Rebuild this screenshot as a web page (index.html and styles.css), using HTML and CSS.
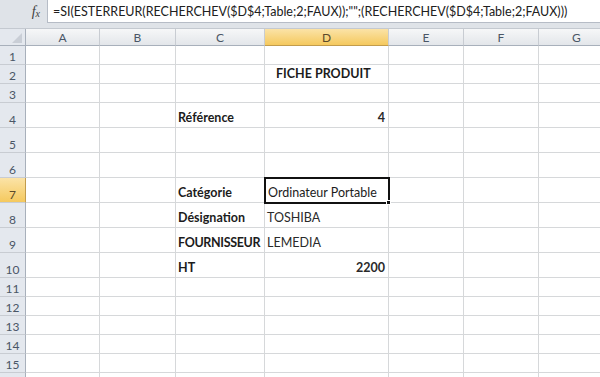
FILE: index.html
```html
<!DOCTYPE html>
<html>
<head>
<meta charset="utf-8">
<link rel="stylesheet" href="styles.css">
</head>
<body>
<div class="app">
  <div class="fbar">
    <div class="fx"><span>f</span><span class="x">x</span></div>
    <div class="finput">=SI(ESTERREUR(RECHERCHEV($D$4;Table;2;FAUX));"";(RECHERCHEV($D$4;Table;2;FAUX)))</div>
  </div>
  <div class="sheet">
    <div class="corner"><svg width="10" height="10" viewBox="0 0 10 10"><polygon points="10,0 10,10 0,10" fill="#c9ced6"/></svg></div>
    <div class="ch">A</div><div class="ch">B</div><div class="ch">C</div><div class="ch selh">D</div><div class="ch">E</div><div class="ch">F</div><div class="ch">G</div>

    <div class="rh">1</div><div class="c"></div><div class="c"></div><div class="c"></div><div class="c"></div><div class="c"></div><div class="c"></div><div class="c"></div>
    <div class="rh">2</div><div class="c"></div><div class="c"></div><div class="c"></div><div class="c title">FICHE PRODUIT</div><div class="c"></div><div class="c"></div><div class="c"></div>
    <div class="rh">3</div><div class="c"></div><div class="c"></div><div class="c"></div><div class="c"></div><div class="c"></div><div class="c"></div><div class="c"></div>
    <div class="rh">4</div><div class="c"></div><div class="c"></div><div class="c lbl">Référence</div><div class="c num">4</div><div class="c"></div><div class="c"></div><div class="c"></div>
    <div class="rh">5</div><div class="c"></div><div class="c"></div><div class="c"></div><div class="c"></div><div class="c"></div><div class="c"></div><div class="c"></div>
    <div class="rh">6</div><div class="c"></div><div class="c"></div><div class="c"></div><div class="c"></div><div class="c"></div><div class="c"></div><div class="c"></div>
    <div class="rh selr">7</div><div class="c"></div><div class="c"></div><div class="c lbl">Catégorie</div><div class="c sel">Ordinateur Portable<span class="handle"></span></div><div class="c"></div><div class="c"></div><div class="c"></div>
    <div class="rh">8</div><div class="c"></div><div class="c"></div><div class="c lbl">Désignation</div><div class="c val">TOSHIBA</div><div class="c"></div><div class="c"></div><div class="c"></div>
    <div class="rh">9</div><div class="c"></div><div class="c"></div><div class="c lbl caps">FOURNISSEUR</div><div class="c val">LEMEDIA</div><div class="c"></div><div class="c"></div><div class="c"></div>
    <div class="rh">10</div><div class="c"></div><div class="c"></div><div class="c lbl">HT</div><div class="c num">2200</div><div class="c"></div><div class="c"></div><div class="c"></div>
    <div class="rh">11</div><div class="c"></div><div class="c"></div><div class="c"></div><div class="c"></div><div class="c"></div><div class="c"></div><div class="c"></div>
    <div class="rh">12</div><div class="c"></div><div class="c"></div><div class="c"></div><div class="c"></div><div class="c"></div><div class="c"></div><div class="c"></div>
    <div class="rh">13</div><div class="c"></div><div class="c"></div><div class="c"></div><div class="c"></div><div class="c"></div><div class="c"></div><div class="c"></div>
    <div class="rh">14</div><div class="c"></div><div class="c"></div><div class="c"></div><div class="c"></div><div class="c"></div><div class="c"></div><div class="c"></div>
    <div class="rh">15</div><div class="c"></div><div class="c"></div><div class="c"></div><div class="c"></div><div class="c"></div><div class="c"></div><div class="c"></div>
    <div class="rh"></div><div class="c"></div><div class="c"></div><div class="c"></div><div class="c"></div><div class="c"></div><div class="c"></div><div class="c"></div>
  </div>
</div>
</body>
</html>
```
FILE: styles.css
```css
* { box-sizing: border-box; }
html, body { margin: 0; padding: 0; background: #fff; overflow: hidden; }
body { width: 600px; height: 377px; font-family: Lato, "Liberation Sans", sans-serif; color: #1c1c1c; }
.app { width: 600px; height: 377px; overflow: hidden; }

.fbar {
  height: 29px;
  background: #dfe3e8;
  display: flex;
  align-items: flex-start;
  border-bottom: 1px solid #c4c9d0;
}
.fx {
  width: 47px;
  height: 23px;
  display: flex;
  align-items: center;
  justify-content: flex-end;
  padding-right: 7px;
  font-family: "Liberation Serif", serif;
  font-style: italic;
  font-size: 14px;
  color: #3c3c3c;
}
.fx .x { font-size: 10px; margin-top: 3px; }
.finput {
  flex: 1;
  height: 23px;
  background: #fff;
  border-left: 1px solid #b6bcc6;
  border-bottom: 1px solid #b6bcc6;
  padding-left: 5px;
  display: flex;
  align-items: center;
  font-size: 12.5px;
  white-space: nowrap;
  color: #202020;
}

.sheet {
  display: grid;
  grid-template-columns: 26px 74px 76px 89px 124px 75px 75px 76px;
  grid-template-rows: 17px 19px 19px 19px 25px 25px 25px 25px 25px 25px 25px 19px 19px 19px 19px 19px 19px;
}
.corner {
  background: #e4e8ee;
  border-right: 1px solid #a8b0bb;
  border-bottom: 1px solid #a8b0bb;
  display: flex;
  align-items: flex-end;
  justify-content: flex-end;
  padding: 0 3px 2px 0;
}
.ch {
  background: linear-gradient(#f6f7f8, #e3e6ea);
  border-right: 1px solid #c8ccd2;
  border-bottom: 1px solid #a8b0bb;
  display: flex;
  align-items: center;
  justify-content: center;
  font-size: 12px;
  color: #4a5666;
}
.ch.selh {
  background: linear-gradient(#fbe3a7, #f5c95e);
  border-bottom: 1px solid #c29c4c;
  color: #5b4a2a;
}
.rh {
  background: #e4e8ee;
  border-right: 1px solid #a8b0bb;
  border-bottom: 1px solid #c8ccd2;
  display: flex;
  align-items: flex-end;
  justify-content: center;
  padding-bottom: 0;
  font-size: 12px;
  color: #4a5666;
}
.rh.selr {
  background: linear-gradient(#fbe3a7, #f5c95e);
  border-right: 1px solid #c29c4c;
  color: #5b4a2a;
}
.c {
  border-right: 1px solid #d6d8da;
  border-bottom: 1px solid #d6d8da;
  display: flex;
  align-items: flex-end;
  padding: 0 2px 2px 2px;
  font-size: 12.5px;
  white-space: nowrap;
  position: relative;
}
.lbl { font-weight: bold; }
.caps { letter-spacing: -0.35px; }
.title { font-weight: bold; padding-left: 11px; }
.num { justify-content: flex-end; font-weight: bold; padding-right: 3px; color: #2a2a2a; }
.val { color: #2a2a2a; }
.sel {
  outline: 2px solid #111;
  outline-offset: -1px;
  padding-left: 3px;
  z-index: 2;
}
.handle {
  position: absolute;
  right: -3px;
  bottom: -3px;
  width: 5px;
  height: 5px;
  background: #111;
  border: 1px solid #fff;
}
```
